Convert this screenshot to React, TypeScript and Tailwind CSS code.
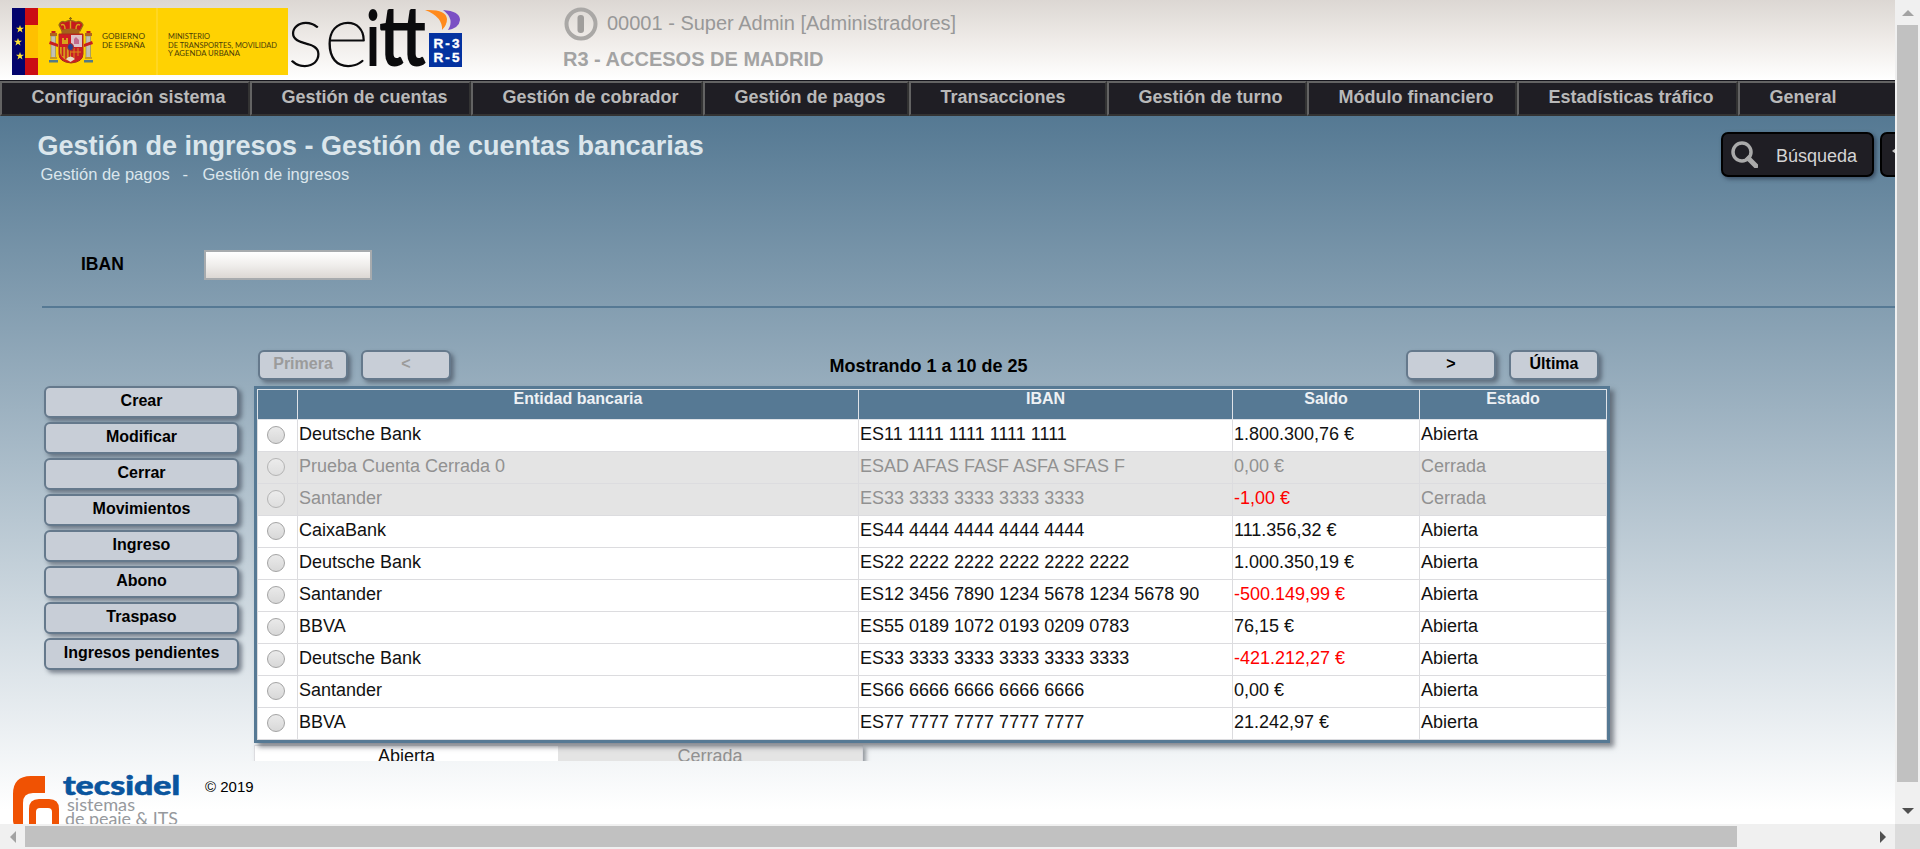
import React from "react";

const menu = [
  { label: "Configuración sistema", width: "w-[250px]" },
  { label: "Gestión de cuentas", width: "w-[221px]" },
  { label: "Gestión de cobrador", width: "w-[232px]" },
  { label: "Gestión de pagos", width: "w-[206px]" },
  { label: "Transacciones", width: "w-[198px]" },
  { label: "Gestión de turno", width: "w-[200px]" },
  { label: "Módulo financiero", width: "w-[210px]" },
  { label: "Estadísticas tráfico", width: "w-[221px]" },
  { label: "General", width: "w-[200px]" },
];

const actions = ["Crear", "Modificar", "Cerrar", "Movimientos", "Ingreso", "Abono", "Traspaso", "Ingresos pendientes"];

type Account = { bank: string; iban: string; balance: string; closed?: boolean };

const accounts: Account[] = [
  { bank: "Deutsche Bank", iban: "ES11 1111 1111 1111 1111", balance: "1.800.300,76 €" },
  { bank: "Prueba Cuenta Cerrada 0", iban: "ESAD AFAS FASF ASFA SFAS F", balance: "0,00 €", closed: true },
  { bank: "Santander", iban: "ES33 3333 3333 3333 3333", balance: "-1,00 €", closed: true },
  { bank: "CaixaBank", iban: "ES44 4444 4444 4444 4444", balance: "111.356,32 €" },
  { bank: "Deutsche Bank", iban: "ES22 2222 2222 2222 2222 2222", balance: "1.000.350,19 €" },
  { bank: "Santander", iban: "ES12 3456 7890 1234 5678 1234 5678 90", balance: "-500.149,99 €" },
  { bank: "BBVA", iban: "ES55 0189 1072 0193 0209 0783", balance: "76,15 €" },
  { bank: "Deutsche Bank", iban: "ES33 3333 3333 3333 3333 3333", balance: "-421.212,27 €" },
  { bank: "Santander", iban: "ES66 6666 6666 6666 6666", balance: "0,00 €" },
  { bank: "BBVA", iban: "ES77 7777 7777 7777 7777", balance: "21.242,97 €" },
];

const columns = "grid grid-cols-[40px_561px_374px_187px_187px]";

function GovernmentLogo() {
  const star = "M0,-4 L1,-1.2 L4,-1.2 L1.6,0.6 L2.5,3.6 L0,1.8 L-2.5,3.6 L-1.6,0.6 L-4,-1.2 L-1,-1.2 Z";
  return (
    <svg width="276" height="67" viewBox="12 8 276 67" className="shrink-0">
      <rect x="12" y="8" width="276" height="67" fill="#ffd202" />
      <rect x="12" y="8" width="14" height="67" fill="#04046c" />
      <rect x="25" y="8" width="13" height="67" fill="#cb0d14" />
      <rect x="25" y="25" width="13" height="33" fill="#ffc000" />
      <g fill="#ffe436">
        <path d={star} transform="translate(20 29)" />
        <path d={star} transform="translate(18 42)" />
        <path d={star} transform="translate(20 56)" />
      </g>
      <line x1="157" y1="8" x2="157" y2="75" stroke="#ffdc40" />
      {/* coat of arms */}
      <path d="M70.500 17v4M69 18.500h3" stroke="#8a6a10" strokeWidth="1.200" />
      <path d="M59 25q2-5 6-3q5-3 11 0q5-2 7 3l-3 6q-9-3-18 0z" fill="#c61a1c" stroke="#9a6c14" strokeWidth="1.300" />
      <path d="M61 25q4-2 4 4M80 25q-4-2-4 4M70.500 21v8" fill="none" stroke="#d9a21b" strokeWidth="1.400" />
      <path d="M61.500 30q9-3 18 0v4h-18z" fill="#a5621c" />
      <path d="M59 34h24v20q0 8-12 9q-12-1-12-9z" fill="#cf1c22" stroke="#a4301c" strokeWidth="1" />
      <path d="M71 35h11v12H71z" fill="#dcc3c8" />
      <path d="M74 44v-5l2-2 3 3v4z" fill="#c26a8c" />
      <path d="M71 47h11v8q-1 5-11 7z" fill="#c81f24" />
      <path d="M74 48v10M78 48v8M71 52h10" stroke="#d98b19" strokeWidth="1" />
      <path d="M60 47h11v14q-9-1-11-8z" fill="#d79a1b" />
      <path d="M62.500 47v9M66 47v12M69.500 47v13" stroke="#c81f24" strokeWidth="1.500" />
      <path d="M62 44v-6h2v2h2v-2h2v6z" fill="#d9a21b" />
      <ellipse cx="70.500" cy="47" rx="3" ry="3.600" fill="#27408f" stroke="#b53023" />
      <path d="M66 59q4.500-5 9 0l-4.500 3z" fill="#e8dcc8" />
      <g>
        <rect x="51" y="36" width="4.500" height="22" fill="#c3c0b4" stroke="#7f826f" strokeWidth="0.600" />
        <rect x="86" y="36" width="4.500" height="22" fill="#c3c0b4" stroke="#7f826f" strokeWidth="0.600" />
        <path d="M50 33h7v3h-7zM85 33h7v3h-7z" fill="#b2641d" />
        <path d="M51.500 31h4v2h-4zM86.500 31h4v2h-4z" fill="#c61a1c" />
        <path d="M50 41l8 3v3l-9-3zM92 41l-8 3v3l9-3z" fill="#ca1f1d" />
        <path d="M50 57h7v2h-7zM85 57h7v2h-7z" fill="#c99b21" />
        <path d="M49 60h9v2.500h-9zM84 60h9v2.500h-9z" fill="#557a86" />
      </g>
      <g fill="#4a3d08" fontFamily="Lato, sans-serif" fontSize="8">
        <text x="102" y="39" textLength="43" lengthAdjust="spacingAndGlyphs">GOBIERNO</text>
        <text x="102" y="47.500" textLength="43" lengthAdjust="spacingAndGlyphs">DE ESPAÑA</text>
        <text x="168" y="39" textLength="42" lengthAdjust="spacingAndGlyphs">MINISTERIO</text>
        <text x="168" y="47.500" textLength="109" lengthAdjust="spacingAndGlyphs">DE TRANSPORTES, MOVILIDAD</text>
        <text x="168" y="56" textLength="72" lengthAdjust="spacingAndGlyphs">Y AGENDA URBANA</text>
      </g>
    </svg>
  );
}

function SeittLogo() {
  return (
    <svg width="176" height="67" viewBox="288 8 176 67" className="shrink-0 overflow-visible">
      <g fontFamily="Lato, sans-serif" fill="#0b0b0d">
        <text x="287" y="66" fontSize="88" fontWeight="100" textLength="82" lengthAdjust="spacingAndGlyphs" stroke="#0b0b0d" strokeWidth="1.300">se</text>
        <text x="366" y="66" fontSize="76" fontWeight="700" textLength="14" lengthAdjust="spacingAndGlyphs">i</text>
        <text x="379" y="66" fontSize="84" fontWeight="700" textLength="47" lengthAdjust="spacingAndGlyphs">tt</text>
      </g>
      <path d="M425 10q21-1 22 9q0 6-5 11q1-13-17-20z" fill="#ff8a1c" />
      <path d="M443 10q17 1 17 10q-1 8-12 10q7-11-5-20z" fill="#7b50c4" />
      <rect x="429" y="33" width="33" height="34" fill="#0432a0" />
      <g fontFamily="Liberation Sans, sans-serif" fontWeight="700" fontSize="13.500" fill="#fff" stroke="#fff" strokeWidth="0.400">
        <text x="433.500" y="48" textLength="26" lengthAdjust="spacing">R-3</text>
        <text x="433.500" y="61.500" textLength="26" lengthAdjust="spacing">R-5</text>
      </g>
    </svg>
  );
}

function TecsidelLogo() {
  return (
    <svg width="170" height="52" viewBox="12 772 170 52" className="block shrink-0">
      <path d="M45 776v17H33q-10 0-10 10v24H19q-6 0-6-7V794q0-18 18-18z" fill="#f05203" />
      <path d="M29 827V809q0-10 10-10h10q10 0 10 10v18h-7V812q0-4-4-4H40q-4 0-4 4v15z" fill="#f05203" />
      <text x="63" y="794.500" fontFamily="Lato, sans-serif" fontWeight="900" fontSize="26" fill="#0a559e" stroke="#0a559e" strokeWidth="0.600" textLength="117" lengthAdjust="spacingAndGlyphs">tecsidel</text>
      <g fontFamily="Lato, sans-serif" fontSize="17" fill="#96999d">
        <text x="67" y="811" textLength="68" lengthAdjust="spacingAndGlyphs">sistemas</text>
        <text x="65" y="825" textLength="113" lengthAdjust="spacingAndGlyphs">de peaje &amp; ITS</text>
      </g>
    </svg>
  );
}

function ActionButton({ children, className = "", disabled = false }: { children: React.ReactNode; className?: string; disabled?: boolean }) {
  return (
    <button
      disabled={disabled}
      className={`block shrink-0 rounded-[6px] border-2 border-[#65798c] bg-[#c8ced7] text-center text-[16px] font-bold shadow-[3px_3px_4px_rgba(60,70,85,0.6)] ${disabled ? "text-[#9b9b9b]" : "text-black"} ${className}`}
    >
      {children}
    </button>
  );
}

function Header() {
  return (
    <header className="flex h-20 bg-linear-to-b from-[#dcd7d3] via-[#efebe8] to-white pl-3">
      <div className="flex pt-2">
        <GovernmentLogo />
        <SeittLogo />
      </div>
      <div className="ml-[99px] pt-[7px] text-[#989898]">
        <div className="flex h-[34px] items-center">
          <svg width="34" height="34" viewBox="0 0 34 34" className="mr-[9px] ml-px">
            <circle cx="17" cy="17" r="14.500" fill="none" stroke="#aaa8a6" strokeWidth="4" />
            <rect x="13.500" y="8" width="6.500" height="18" rx="3" fill="#a09e9c" />
          </svg>
          <span className="-mt-[3px] text-[20px] leading-6">00001 - Super Admin [Administradores]</span>
        </div>
        <div className="mt-[6px] text-[20px] leading-6 font-bold text-[#a3a3a3]">R3 - ACCESOS DE MADRID</div>
      </div>
    </header>
  );
}

function Menu() {
  return (
    <nav className="flex h-9 w-[1940px] border-t border-[#15151c] bg-[#1f1e24]">
      {menu.map((item) => (
        <div
          key={item.label}
          className={`${item.width} h-[35px] shrink-0 border-2 border-t-[#636363] border-r-[#333] border-b-[#333] border-l-[#636363] pl-[29.500px] text-[18px] leading-[28px] font-bold text-[#b9b9b9]`}
        >
          {item.label}
        </div>
      ))}
    </nav>
  );
}

function AccountTable() {
  return (
    <div className="relative w-[1356px] border-[3px] border-[#567994] bg-[#567994] shadow-[4px_4px_5px_rgba(60,65,75,0.6)]">
      <div className={`${columns} h-[31px] border-t border-l border-[#dfe3e8] text-center text-[16px] leading-[17px] font-bold text-[#eef1f4]`}>
        {["", "Entidad bancaria", "IBAN", "Saldo", "Estado"].map((title) => (
          <div key={title} className="border-r border-b border-[#dfe3e8]">{title}</div>
        ))}
      </div>
      {accounts.map((account) => (
        <div
          key={account.bank + account.iban}
          className={`${columns} h-8 border-l border-[#dcdcdf] text-[18px] leading-[29px] ${account.closed ? "bg-[#e4e4e4] text-[#919191]" : "bg-white text-[#111]"}`}
        >
          <div className="border-r border-b border-[#dcdcdf] pt-[6px] pl-[9px]">
            <span className={`block size-[18px] rounded-full border bg-linear-to-b ${account.closed ? "border-[#b4b4b4] from-[#ececec] to-[#dedede]" : "border-[#a3a3a3] from-[#eaeaea] to-[#d8d8d8]"}`} />
          </div>
          <div className="border-r border-b border-[#dcdcdf] pl-px">{account.bank}</div>
          <div className="border-r border-b border-[#dcdcdf] pl-px">{account.iban}</div>
          <div className={`border-r border-b border-[#dcdcdf] pl-px ${account.balance.startsWith("-") ? "text-[#ff0000]" : ""}`}>{account.balance}</div>
          <div className="border-r border-b border-[#dcdcdf] pl-px">{account.closed ? "Cerrada" : "Abierta"}</div>
        </div>
      ))}
    </div>
  );
}

function Content() {
  return (
    <main className="flex h-[645px] flex-col overflow-hidden">
      <div className="flex h-[134px] shrink-0 pt-4">
        <div className="w-[1721px] shrink-0 pl-[37.500px] text-[#dbe6ec]">
          <h1 className="-mt-px text-[27px] leading-[30px] font-bold">Gestión de ingresos - Gestión de cuentas bancarias</h1>
          <div className="flex pl-[3px] text-[16.500px] leading-[26px]">
            <span className="w-[142px]">Gestión de pagos</span>
            <span className="w-[20px]">-</span>
            <span>Gestión de ingresos</span>
          </div>
        </div>
        <button className="flex h-[45px] w-[153px] shrink-0 items-center rounded-[7px] border-2 border-black bg-[#1f1e24] pl-2 text-[18px] text-[#d4d4d4] shadow-[2px_2px_4px_rgba(30,40,60,0.6)]">
          <svg width="27" height="27" viewBox="0 0 27 27" className="mr-[18px]" fill="none" stroke="#aaa">
            <circle cx="11" cy="11" r="9" strokeWidth="3.500" />
            <path d="M17.500 17.500L25 25" strokeWidth="5" strokeLinecap="square" />
          </svg>
          <span className="pt-[3px]">Búsqueda</span>
        </button>
        <button className="ml-[6px] flex h-[45px] w-[153px] shrink-0 rounded-[7px] border-2 border-black bg-[#1f1e24] pt-[14px] pl-[10px]">
          <svg width="16" height="12" viewBox="0 0 16 12"><path d="M0 3L4 0v6z" fill="#c8c8c8" /></svg>
        </button>
      </div>
      <div className="ml-[42px] flex h-[58px] shrink-0 border-b-2 border-[#567994] pl-[39px]">
        <label className="w-[123px] text-[17.500px] leading-[28px] font-bold text-black">IBAN</label>
        <input className="h-[30px] w-[168px] border-2 border-[#a7abae] bg-linear-to-b from-white via-[#f0eeec] to-[#dcd8d4] px-1 outline-none" />
      </div>
      <div className="flex shrink-0 pt-[42px] pl-11">
        <aside className="flex w-[210px] shrink-0 flex-col gap-1 pt-9">
          {actions.map((label) => (
            <ActionButton key={label} className="h-8 w-[195px] pb-[3px]">{label}</ActionButton>
          ))}
        </aside>
        <section className="w-[1356px] shrink-0">
          <div className="flex h-9 pl-1">
            <ActionButton disabled className="h-[30px] w-[90px] pb-[3px]">Primera</ActionButton>
            <ActionButton disabled className="ml-[13px] h-[30px] w-[90px] pb-[3px]">&lt;</ActionButton>
            <div className="w-[955px] pt-[3px] text-center text-[18px] leading-[27px] font-bold text-black">Mostrando 1 a 10 de 25</div>
            <ActionButton className="h-[30px] w-[90px] pb-[3px]">&gt;</ActionButton>
            <ActionButton className="ml-[13px] h-[30px] w-[90px] pb-[3px]">Última</ActionButton>
          </div>
          <AccountTable />
          <div className="mt-[2px] flex h-8 w-[609px] border border-[#dcdce0] bg-white text-center text-[18px] leading-[21px] shadow-[3px_3px_4px_rgba(60,65,75,0.5)]">
            <div className="w-[303px] text-[#111]">Abierta</div>
            <div className="flex-1 bg-[#e4e4e4] text-[#919191]">Cerrada</div>
          </div>
        </section>
      </div>
    </main>
  );
}

export default function App() {
  return (
    <div className="grid h-[849px] w-[1920px] grid-cols-[1895px_25px] grid-rows-[824px_25px] overflow-hidden bg-[#f0f0f0] font-['Liberation_Sans',Arial,sans-serif]">
      <div className="overflow-hidden">
        <Header />
        <Menu />
        <div className="h-[708px] bg-[linear-gradient(to_bottom,#557993_0%,#ffffff_98%)]">
          <Content />
          <footer className="flex h-[63px] overflow-hidden pt-[11px] pl-3">
            <TecsidelLogo />
            <span className="ml-[23px] pt-[5px] text-[15px] leading-[19px] text-black">© 2019</span>
          </footer>
        </div>
      </div>
      <div className="flex flex-col items-center">
        <div className="flex h-[25px] items-center">
          <svg width="12" height="6" viewBox="0 0 12 6"><path d="M0 6L6 0l6 6z" fill="#a3a3a3" /></svg>
        </div>
        <div className="h-[757px] w-[21px] bg-[#c1c1c1]" />
        <div className="flex flex-1 items-end pb-[10px]">
          <svg width="12" height="6" viewBox="0 0 12 6"><path d="M0 0h12L6 6z" fill="#505050" /></svg>
        </div>
      </div>
      <div className="flex items-center">
        <div className="flex w-[25px] justify-center">
          <svg width="6" height="12" viewBox="0 0 6 12"><path d="M6 0v12L0 6z" fill="#a3a3a3" /></svg>
        </div>
        <div className="h-[21px] w-[1712px] bg-[#c1c1c1]" />
        <div className="flex flex-1 justify-end pr-[9px]">
          <svg width="6" height="12" viewBox="0 0 6 12"><path d="M0 0l6 6-6 6z" fill="#505050" /></svg>
        </div>
      </div>
      <div className="bg-[#dcdcdc]" />
    </div>
  );
}
